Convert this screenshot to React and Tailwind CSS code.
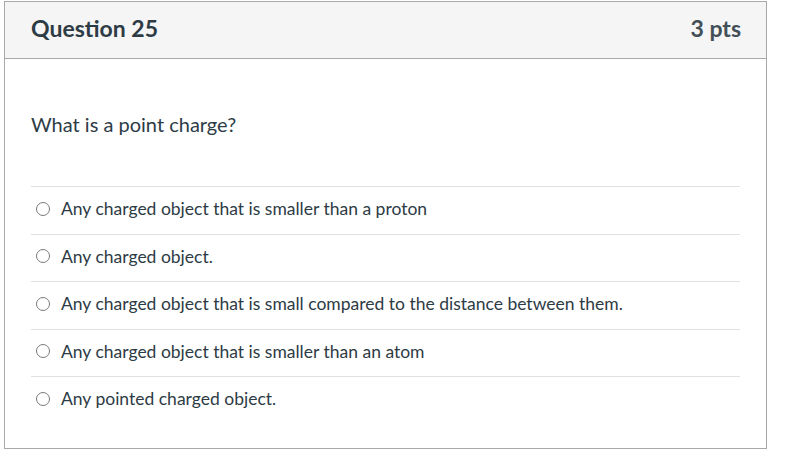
import React from "react";

const answers = [
  "Any charged object that is smaller than a proton",
  "Any charged object.",
  "Any charged object that is small compared to the distance between them.",
  "Any charged object that is smaller than an atom",
  "Any pointed charged object.",
];

export default function App() {
  return (
    <div className="w-[812px] h-[453px] bg-white pt-px pl-1" style={{ fontFamily: "Lato, 'Open Sans', sans-serif" }}>
      <div className="w-[763px] h-[448px] border border-[#a8a8a8] flex flex-col text-[#2d3b45]">
        <div className="h-[57px] bg-[#f5f5f5] border-b border-[#a8a8a8] flex items-center justify-between pl-[26px] pr-[25px]">
          <div className="text-[23px] font-bold leading-none pb-[4px]">Question 25</div>
          <div className="text-[23px] font-bold leading-none pb-[4px] text-[#434f57]">3 pts</div>
        </div>
        <div className="px-[26px] pt-[50px]">
          <div className="text-[20px] leading-[30px]">What is a point charge?</div>
          <div className="mt-[47px]">
            {answers.map((a, i) => (
              <div key={i} className="h-[47.5px] border-t border-[#e1e1e1] flex items-center pl-[5px] pb-[3px]">
                <span className="w-[14px] h-[14px] rounded-full border border-[#7a7a7a] shrink-0 bg-white"></span>
                <span className="ml-[11px] text-[17.5px] leading-none">{a}</span>
              </div>
            ))}
          </div>
        </div>
      </div>
    </div>
  );
}
